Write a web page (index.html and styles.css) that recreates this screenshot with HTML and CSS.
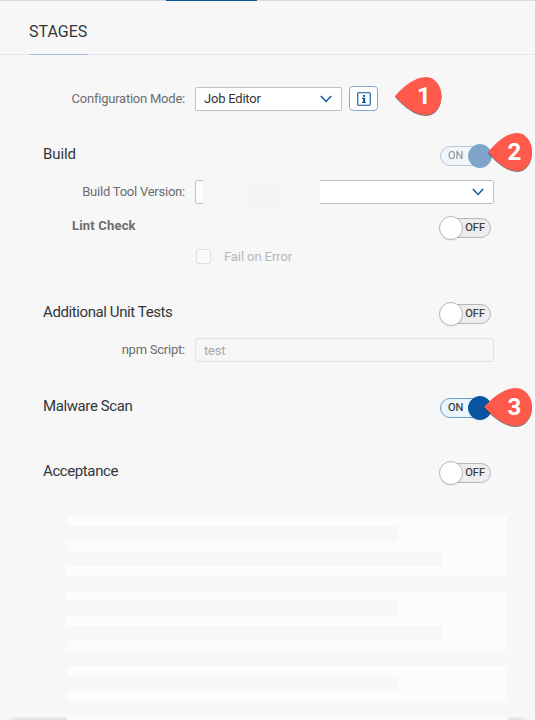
FILE: index.html
```html
<!DOCTYPE html>
<html lang="en">
<head>
<meta charset="utf-8">
<title>Stages</title>
<link rel="stylesheet" href="styles.css">
</head>
<body>
<div class="page">
  <div class="tabline"><div class="tabline-active"></div></div>
  <header class="header"><h1 class="heading">STAGES</h1></header>
  <main class="form">
    <div class="row config">
      <label class="label">Configuration Mode:</label>
      <div class="field select short"><span class="value">Job Editor</span>
        <svg class="chevron" viewBox="0 0 12 8"><path d="M.8 1 6 6.4 11.2 1"/></svg></div>
      <button class="info" aria-label="Information"><svg viewBox="0 0 14 14"><rect x=".8" y=".8" width="12.4" height="12.4" rx=".6"/><path class="glyph" d="M6 3h2v1.7H6zM5 5.8h3v4.2h1.1v1.1H5V10h1.1V6.9H5z"/></svg></button>
    </div>
    <div class="row build">
      <h2 class="title t-build">Build</h2>
      <div class="switch on disabled"><span class="track">ON</span><span class="knob"></span></div>
    </div>
    <div class="row version">
      <label class="label">Build Tool Version:</label>
      <div class="field select"><span class="mask"></span>
        <svg class="chevron" viewBox="0 0 12 8"><path d="M.8 1 6 6.4 11.2 1"/></svg></div>
    </div>
    <div class="row lint">
      <h3 class="subtitle">Lint Check</h3>
      <div class="switch"><span class="track">OFF</span><span class="knob"></span></div>
    </div>
    <div class="row check"><span class="box"></span><span class="fail">Fail on Error</span></div>
    <div class="row unit">
      <h2 class="title">Additional Unit Tests</h2>
      <div class="switch"><span class="track">OFF</span><span class="knob"></span></div>
    </div>
    <div class="row npm">
      <label class="label">npm Script:</label>
      <div class="field readonly"><span class="value">test</span></div>
    </div>
    <div class="row malware">
      <h2 class="title">Malware Scan</h2>
      <div class="switch on"><span class="track">ON</span><span class="knob"></span></div>
    </div>
    <div class="row accept">
      <h2 class="title">Acceptance</h2>
      <div class="switch"><span class="track">OFF</span><span class="knob"></span></div>
    </div>
    <div class="skeletons">
      <div class="skeleton"><i></i><i class="wide"></i></div>
      <div class="skeleton"><i></i><i class="wide"></i></div>
      <div class="skeleton partial"><i></i></div>
      <div class="skeleton last"></div>
    </div>
  </main>
  <div class="shadow left"></div><div class="shadow right"></div>
  <div class="callout one"><svg viewBox="0 0 47 38" preserveAspectRatio="none"><path d="M0 19C9 9 20 0 31 0 40 0 46.5 9 46.5 19S40 38 31 38C20 38 9 29 0 19Z"/></svg><b>1</b></div>
  <div class="callout two"><svg viewBox="0 0 47 38" preserveAspectRatio="none"><path d="M0 19C9 9 20 0 31 0 40 0 46.5 9 46.5 19S40 38 31 38C20 38 9 29 0 19Z"/></svg><b>2</b></div>
  <div class="callout three"><svg viewBox="0 0 47 38" preserveAspectRatio="none"><path d="M0 19C9 9 20 0 31 0 40 0 46.5 9 46.5 19S40 38 31 38C20 38 9 29 0 19Z"/></svg><b>3</b></div>
</div>
</body>
</html>
```
FILE: styles.css
```css
* { box-sizing: border-box; }
body { margin: 0; background: #f7f7f7; font-family: Roboto, "Liberation Sans", sans-serif; color: #32363a; }
.page { position: relative; width: 535px; height: 720px; overflow: hidden; }
.tabline { height: 1px; background: #d9d9d9; padding-left: 165.5px; }
.tabline-active { width: 91px; height: 1px; background: #0854a0; }
.header { height: 54px; padding-left: 29px; border-bottom: 1px solid #e7e7e7; }
.heading { width: 59px; height: 54px; margin: 0; border-bottom: 1px solid #a3c2e4; font-size: 16px; font-weight: 400; line-height: 62px; white-space: nowrap; }
.row { display: flex; align-items: center; height: 24px; white-space: nowrap; }
.config { margin-top: 31px; height: 25px; }
.build { margin-top: 33px; }
.version, .lint, .npm { margin-top: 12px; }
.check { margin-top: 9px; height: 15px; padding-left: 196px; }
.unit { margin-top: 38px; }
.malware { margin-top: 34px; }
.accept { margin-top: 41px; }
.label { width: 185px; margin-right: 10px; padding-bottom: 1px; text-align: right; font-size: 13px; letter-spacing: -.23px; color: #6a6d70; }
.field { display: flex; align-items: center; width: 299px; height: 24px; padding: 0 9px 0 8px; border: 1px solid #bfc2c5; border-radius: 2px; background: #fff; font-size: 13px; letter-spacing: -.22px; }
.field.short { width: 147px; }
.field.readonly { border-color: #e1e2e2; background: #f6f6f6; color: #a5a7a8; }
.chevron { width: 12px; height: 8px; margin-left: auto; fill: none; stroke: #0854a0; stroke-width: 1.4; }
.mask { width: 117px; height: 29px; margin: 0 0 0 -1px; background: linear-gradient(90deg, #f5f6f6, #f4f5f5 55%, #f7f7f7); flex: none; transform: translateY(1.5px); }
.info { width: 29px; height: 25px; margin: 0 0 0 7px; padding: 0; display: grid; place-items: center; border: 1px solid #83aad2; border-radius: 4px; background: #fff; }
.info svg { width: 14px; height: 14px; fill: none; stroke: #0854a0; stroke-width: 1.1; }
.info .glyph { fill: #0854a0; stroke: none; }
.title { margin: 0 0 4px 43px; font-size: 15px; font-weight: 400; letter-spacing: -.4px; }
.t-build { letter-spacing: -.1px; }
.subtitle { margin: 0 0 5px 72px; font-size: 13px; font-weight: 700; letter-spacing: .18px; color: #6a6d70; }
.switch { position: relative; display: flex; align-items: center; width: 51px; height: 24px; margin: 0 44px 0 auto; }
.track { width: 51px; height: 20px; padding-right: 5px; border: 1px solid #b5b8bb; border-radius: 10px; background: #ededed; font-size: 11px; line-height: 18px; text-align: right; color: #32363a; -webkit-text-stroke: .2px #32363a; }
.knob { position: absolute; left: -1px; top: 0; width: 24px; height: 24px; border: 1px solid #b5b8bb; border-radius: 50%; background: #fff; box-shadow: 0 1px 1px #0001; }
.on .track { padding-left: 7px; text-align: left; border-color: #6a9bcb; background: #ebf5fe; }
.on .knob { left: 28px; border-color: #0854a0; background: #0854a0; }
.disabled { opacity: .5; }
.box { width: 15px; height: 15px; border: 1px solid #dfe0e0; border-radius: 2px; background: #fafafa; }
.fail { margin-left: 13px; font-size: 13px; letter-spacing: -.1px; color: #b6b8ba; }
.skeletons { margin: 31px 0 0 67px; width: 440px; display: grid; gap: 15px; }
.skeleton { height: 60px; padding-top: 10px; background: #fcfcfc; }
.skeleton i { display: block; width: 331px; height: 15px; margin-bottom: 10px; background: #f7f7f7; }
.skeleton i.wide { width: 375px; }
.skeleton.partial { height: 35px; }
.skeleton.last { height: 4px; padding: 0; }
.shadow { position: absolute; bottom: 0; height: 4px; }
.left { left: 4px; width: 63px; background: linear-gradient(90deg, #f7f7f7, transparent 14px), linear-gradient(#f7f7f7, #dfdfdf); }
.right { left: 508px; width: 24px; background: linear-gradient(270deg, #f7f7f7, transparent 14px), linear-gradient(#f7f7f7, #dfdfdf); }
.callout { position: absolute; height: 38px; color: #fff; }
.callout svg { display: block; width: 100%; height: 38px; fill: #ff594b; overflow: visible; filter: drop-shadow(0 1px .7px #0008); }
.callout b { position: absolute; right: 8px; top: 0; width: 20px; font: bold 24px/39px Roboto, sans-serif; text-align: center; }
.one { left: 395px; top: 77px; width: 47px; }
.two { left: 488px; top: 133px; width: 44.5px; }
.three { left: 484px; top: 388px; width: 48.5px; }
```
